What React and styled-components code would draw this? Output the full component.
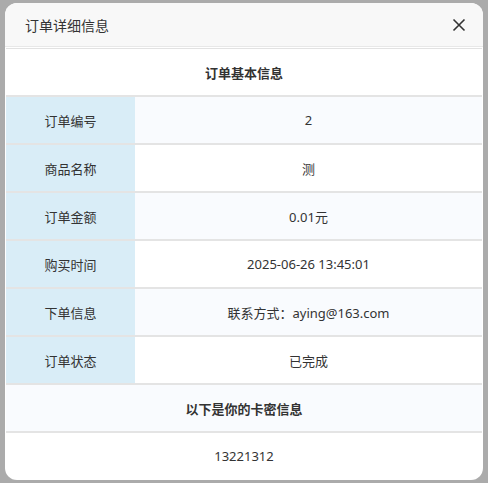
import React from 'react';
import styled, { createGlobalStyle } from 'styled-components';

const GlobalStyle = createGlobalStyle`
  html, body {
    margin: 0;
    padding: 0;
    background: #ababab;
    font-family: "Noto Sans", "Noto Sans CJK SC", sans-serif;
  }
`;

const rows = [
  { label: '订单编号', value: '2' },
  { label: '商品名称', value: '测' },
  { label: '订单金额', value: '0.01元' },
  { label: '购买时间', value: '2025-06-26 13:45:01' },
  { label: '下单信息', value: '联系方式：aying@163.com' },
  { label: '订单状态', value: '已完成' },
];

const CloseIcon = () => (
  <svg width="14" height="14" viewBox="0 0 14 14">
    <path d="M1.5 1.5 L12.5 12.5 M12.5 1.5 L1.5 12.5" stroke="#333" strokeWidth="1.6" fill="none" />
  </svg>
);

const OrderDetail = () => {
  return (
    <Page>
      <Modal>
        <Header>
          <Title>订单详细信息</Title>
          <Close>
            <CloseIcon />
          </Close>
        </Header>
        <Table>
          <SectionRow>订单基本信息</SectionRow>
          {rows.map((r, i) => (
            <Row key={r.label}>
              <Label>{r.label}</Label>
              <Value $striped={i % 2 === 0}>{r.value}</Value>
            </Row>
          ))}
          <SectionRow $striped>以下是你的卡密信息</SectionRow>
          <CardRow>13221312</CardRow>
        </Table>
      </Modal>
    </Page>
  );
};

const Page = styled.div`
  width: 488px;
  height: 483px;
  padding: 3px 5px 0;
  box-sizing: border-box;
  overflow: hidden;
`;

const Modal = styled.div`
  height: 477px;
  background: #fff;
  border-radius: 12px;
  overflow: hidden;
  display: flex;
  flex-direction: column;
`;

const Header = styled.div`
  height: 43px;
  flex-shrink: 0;
  background: #f8f8f8;
  border-bottom: 1px solid #e8e8e8;
  display: flex;
  align-items: center;
  justify-content: space-between;
  padding: 0 17px 0 20px;
`;

const Title = styled.div`
  font-size: 14px;
  color: #333;
`;

const Close = styled.button`
  border: none;
  background: none;
  padding: 0;
  width: 14px;
  height: 14px;
  display: flex;
  cursor: pointer;
`;

const Table = styled.div`
  margin: 1px 1px 0;
  border-top: 1px solid #e2e2e2;
  display: flex;
  flex-direction: column;
`;

const SectionRow = styled.div`
  height: 46px;
  border-bottom: 2px solid #e4e4e4;
  background: ${(p) => (p.$striped ? '#f9fbfe' : '#fff')};
  display: flex;
  align-items: center;
  justify-content: center;
  font-size: 13px;
  font-weight: 700;
  color: #333;
`;

const Row = styled.div`
  display: flex;
  height: 46px;
  border-bottom: 2px solid #e4e4e4;
`;

const Label = styled.div`
  width: 129px;
  flex-shrink: 0;
  background: #d9edf7;
  display: flex;
  align-items: center;
  justify-content: center;
  font-size: 13px;
  color: #333;
`;

const Value = styled.div`
  flex: 1;
  background: ${(p) => (p.$striped ? '#f9fbfe' : '#fff')};
  display: flex;
  align-items: center;
  justify-content: center;
  font-size: 13px;
  color: #333;
`;

const CardRow = styled.div`
  height: 46px;
  display: flex;
  align-items: center;
  justify-content: center;
  font-size: 13px;
  color: #333;
`;

export default function App() {
  return (
    <>
      <GlobalStyle />
      <OrderDetail />
    </>
  );
}
